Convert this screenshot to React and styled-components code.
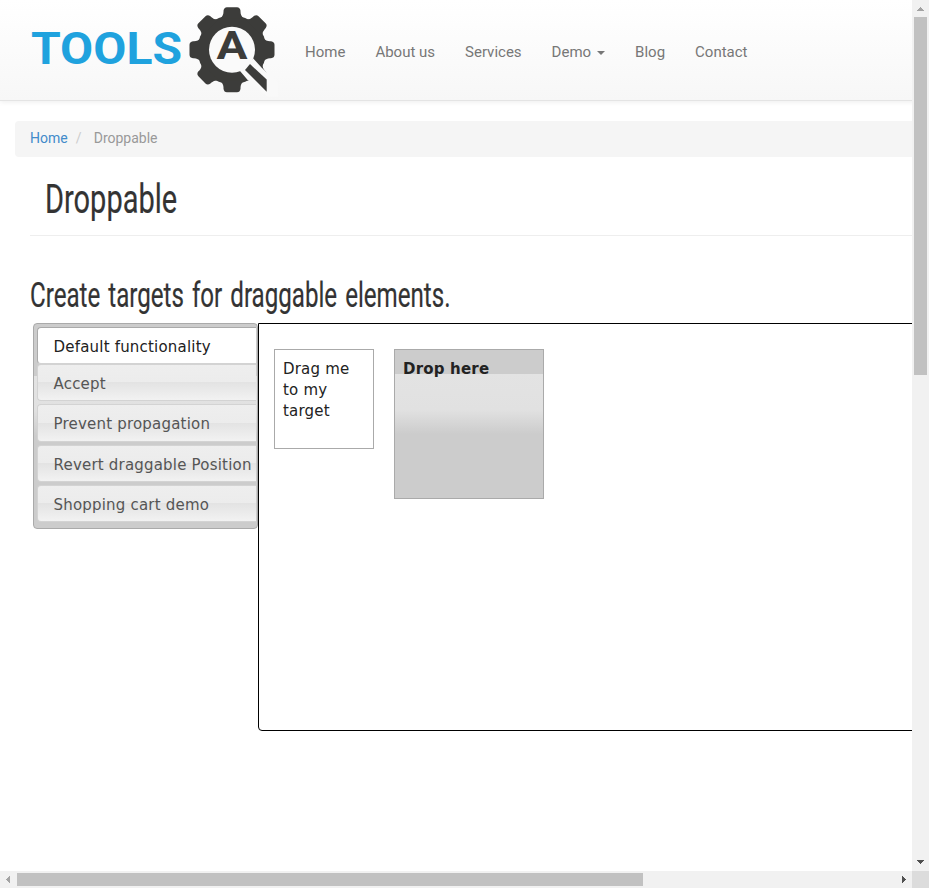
import React from "react";
import styled, { createGlobalStyle } from "styled-components";

const GlobalStyle = createGlobalStyle`
  * { box-sizing: border-box; }
  html, body { margin: 0; padding: 0; overflow: hidden; background: #fff; }
`;

const Frame = styled.div`
  display: grid;
  grid-template-columns: 912px 17px;
  grid-template-rows: 871px 17px;
  width: 929px;
  height: 888px;
  overflow: hidden;
  font-family: Roboto, "Liberation Sans", sans-serif;
`;

const Viewport = styled.div`
  overflow: hidden;
  background: #fff;
`;

const Page = styled.div`
  width: 1410px;
`;

const Header = styled.header`
  display: flex;
  height: 101px;
  padding-left: 30px;
  border-bottom: 1px solid #e4e4e4;
  background: linear-gradient(#ffffff, #f7f7f7);
  box-shadow: 0 1px 5px rgba(0, 0, 0, 0.075);
`;

const LogoArt = styled.svg`
  display: block;
  width: 250px;
  height: 100px;
  flex: none;
`;

const Wordmark = styled.text`
  font-family: Roboto, sans-serif;
  font-size: 43.5px;
  font-weight: 700;
  fill: #1fa2de;
`;

const Monogram = styled.text`
  font-family: Roboto, sans-serif;
  font-size: 39px;
  font-weight: 700;
  fill: #3c3c3a;
`;

const Nav = styled.nav`
  display: flex;
  gap: 30px;
  padding: 41px 0 0 25px;
`;

const NavLink = styled.a`
  display: flex;
  align-items: center;
  height: 22px;
  color: #777;
  font-size: 15px;
  line-height: 22px;
  white-space: nowrap;
`;

const Caret = styled.span`
  margin: 2px 0 0 6px;
  border-top: 4px solid #777;
  border-left: 4px solid transparent;
  border-right: 4px solid transparent;
`;

const Breadcrumb = styled.div`
  display: flex;
  height: 36px;
  margin: 20px 0 0 15px;
  padding-left: 15px;
  border-radius: 4px;
  background: #f5f5f5;
  color: #999;
  font-size: 14px;
  line-height: 35px;
`;

const CrumbLink = styled.a`
  color: #428bca;
`;

const Slash = styled.span`
  width: 26px;
  padding-left: 8px;
  color: #ccc;
`;

const TitleBar = styled.div`
  height: 79px;
  margin-left: 30px;
  padding: 13px 0 0 15px;
  border-bottom: 1px solid #eee;
`;

const Heading = styled.h1`
  width: max-content;
  height: 58px;
  margin: 0;
  color: #333;
  font-family: Roboto, sans-serif;
  font-size: ${(p) => p.$size}px;
  font-weight: 400;
  line-height: 60px;
  word-spacing: 3px;
  white-space: nowrap;
  transform: scaleX(${(p) => p.$squeeze});
  transform-origin: 0 50%;
  -webkit-text-stroke: 0.2px #333;
`;

const Section = styled.section`
  padding: 30px 0 0 30px;
`;

const TabsLayout = styled.div`
  display: flex;
  align-items: flex-start;
  margin: -1px 0 0 3px;
  font-family: "DejaVu Sans", sans-serif;
  font-size: 15px;
  letter-spacing: 0.2px;
`;

const TabList = styled.div`
  display: flex;
  flex-direction: column;
  gap: 3px;
  width: 225px;
  height: 206px;
  padding: 3px 1px 0 3px;
  border: 1px solid #aaa;
  border-radius: 4px;
  background: linear-gradient(#ccc 52px, #e3e3e3 52px, #e1e1e1 86px, #ccc 112px);
`;

const Tab = styled.div`
  height: 37.3px;
  flex: none;
  margin-bottom: ${(p) => (p.$active ? "-3.4px" : "0")};
  padding-left: 15.5px;
  border: 1px solid ${(p) => (p.$active ? "#aaa" : "#d3d3d3")};
  border-right: 0;
  ${(p) => p.$active && "border-bottom-color: #d3d3d3;"}
  border-radius: 4px 0 0 4px;
  background: ${(p) =>
    p.$active ? "#fff" : "linear-gradient(#eeeeee 0, #ececec 50%, #e3e3e3 50%, #f2f2f2 100%)"};
  color: ${(p) => (p.$active ? "#212121" : "#555")};
  line-height: 38px;
  white-space: nowrap;
`;

const Panel = styled.div`
  display: flex;
  align-items: flex-start;
  gap: 20px;
  width: 900px;
  height: 408px;
  padding: 25px 0 0 15px;
  border: 1px solid #000;
  border-radius: 0 4px 4px 4px;
`;

const DragBox = styled.div`
  width: 100px;
  height: 100px;
  padding: 9px 8px;
  border: 1px solid #aaa;
  color: #222;
  line-height: 21px;
`;

const DropBox = styled(DragBox)`
  width: 150px;
  height: 150px;
  font-family: "DejaVu Sans", sans-serif;
  font-weight: 700;
  background: linear-gradient(#ccc 24px, #e3e3e3 24px, #e1e1e1 60px, #ccc 84px);
`;

const VerticalBar = styled.div`
  display: flex;
  flex-direction: column;
  align-items: center;
  justify-content: space-between;
  background: #f1f1f1;
`;

const HorizontalBar = styled.div`
  display: flex;
  align-items: center;
  justify-content: space-between;
  background: #f1f1f1;
`;

const Thumb = styled.div`
  width: ${(p) => p.$w}px;
  height: ${(p) => p.$h}px;
  background: #c1c1c1;
`;

const BarGroup = styled.div`
  display: flex;
  flex-direction: ${(p) => (p.$vertical ? "column" : "row")};
  align-items: center;
`;

const ArrowIcon = styled.svg`
  display: block;
  width: 17px;
  height: 17px;
`;

const Corner = styled.div`
  background: #dcdcdc;
`;

const arrowPaths = {
  up: "M5 11h7v-1h-1V9h-1V8H9V7H8v1H7v1H6v1H5z",
  down: "M5 6h7v1h-1v1h-1v1H9v1H8V9H7V8H6V7H5z",
  left: "M10 5v7H9v-1H8v-1H7V9H6V8h1V7h1V6h1V5z",
  right: "M7 5v7h1v-1h1v-1h1V9h1V8h-1V7H9V6H8V5z",
};

const Arrow = ({ dir, color = "#505050" }) => (
  <ArrowIcon viewBox="0 0 17 17" shapeRendering="crispEdges">
    <path d={arrowPaths[dir]} fill={color} />
  </ArrowIcon>
);

const teeth = [0, 45, 90, 135, 180, 225, 270, 315];

const Logo = () => (
  <LogoArt viewBox="0 0 250 100">
    <Wordmark x="1" y="64" textLength="151" lengthAdjust="spacingAndGlyphs">
      TOOLS
    </Wordmark>
    <g transform="translate(202 49.8)">
      <g fill="#3c3c3a">
        <circle r="34.5" />
        {teeth.map((a) => (
          <path
            key={a}
            transform={`rotate(${a})`}
            d="M-12-31Q-8.5-34-8.5-38V-39Q-8-42.5-5-42.5H5Q8-42.5 8.5-39V-38Q8.5-34 12-31Z"
          />
        ))}
      </g>
      <circle r="23" fill="#fafafa" />
      <path d="M8 21.3L21.3 8.7L29.7 18L46 33V47H36L15.7 30.3Z" fill="#f9f9f9" />
      <path d="M18 14.3L34.7 29.7V42L13 20.3Z" fill="#3c3c3a" />
    </g>
    <Monogram x="186.5" y="59" textLength="31" lengthAdjust="spacingAndGlyphs">
      A
    </Monogram>
  </LogoArt>
);

const navItems = ["Home", "About us", "Services", "Demo", "Blog", "Contact"];
const tabs = [
  "Default functionality",
  "Accept",
  "Prevent propagation",
  "Revert draggable Position",
  "Shopping cart demo",
];

export default function App() {
  return (
    <Frame>
      <GlobalStyle />
      <Viewport>
        <Page>
          <Header>
            <Logo />
            <Nav>
              {navItems.map((item) => (
                <NavLink key={item}>
                  {item}
                  {item === "Demo" && <Caret />}
                </NavLink>
              ))}
            </Nav>
          </Header>
          <Breadcrumb>
            <CrumbLink>Home</CrumbLink>
            <Slash>/</Slash>
            <span>Droppable</span>
          </Breadcrumb>
          <TitleBar>
            <Heading $size={40} $squeeze={0.725}>Droppable</Heading>
          </TitleBar>
          <Section>
            <Heading as="h2" $size={35} $squeeze={0.689}>
              Create targets for draggable elements.
            </Heading>
            <TabsLayout>
              <TabList>
                {tabs.map((tab, i) => (
                  <Tab key={tab} $active={i === 0}>
                    {tab}
                  </Tab>
                ))}
              </TabList>
              <Panel>
                <DragBox>Drag me to my target</DragBox>
                <DropBox>Drop here</DropBox>
              </Panel>
            </TabsLayout>
          </Section>
        </Page>
      </Viewport>
      <VerticalBar>
        <BarGroup $vertical>
          <Arrow dir="up" color="#a3a3a3" />
          <Thumb $w={13} $h={358} />
        </BarGroup>
        <Arrow dir="down" />
      </VerticalBar>
      <HorizontalBar>
        <BarGroup>
          <Arrow dir="left" color="#a3a3a3" />
          <Thumb $w={626} $h={13} />
        </BarGroup>
        <Arrow dir="right" />
      </HorizontalBar>
      <Corner />
    </Frame>
  );
}
